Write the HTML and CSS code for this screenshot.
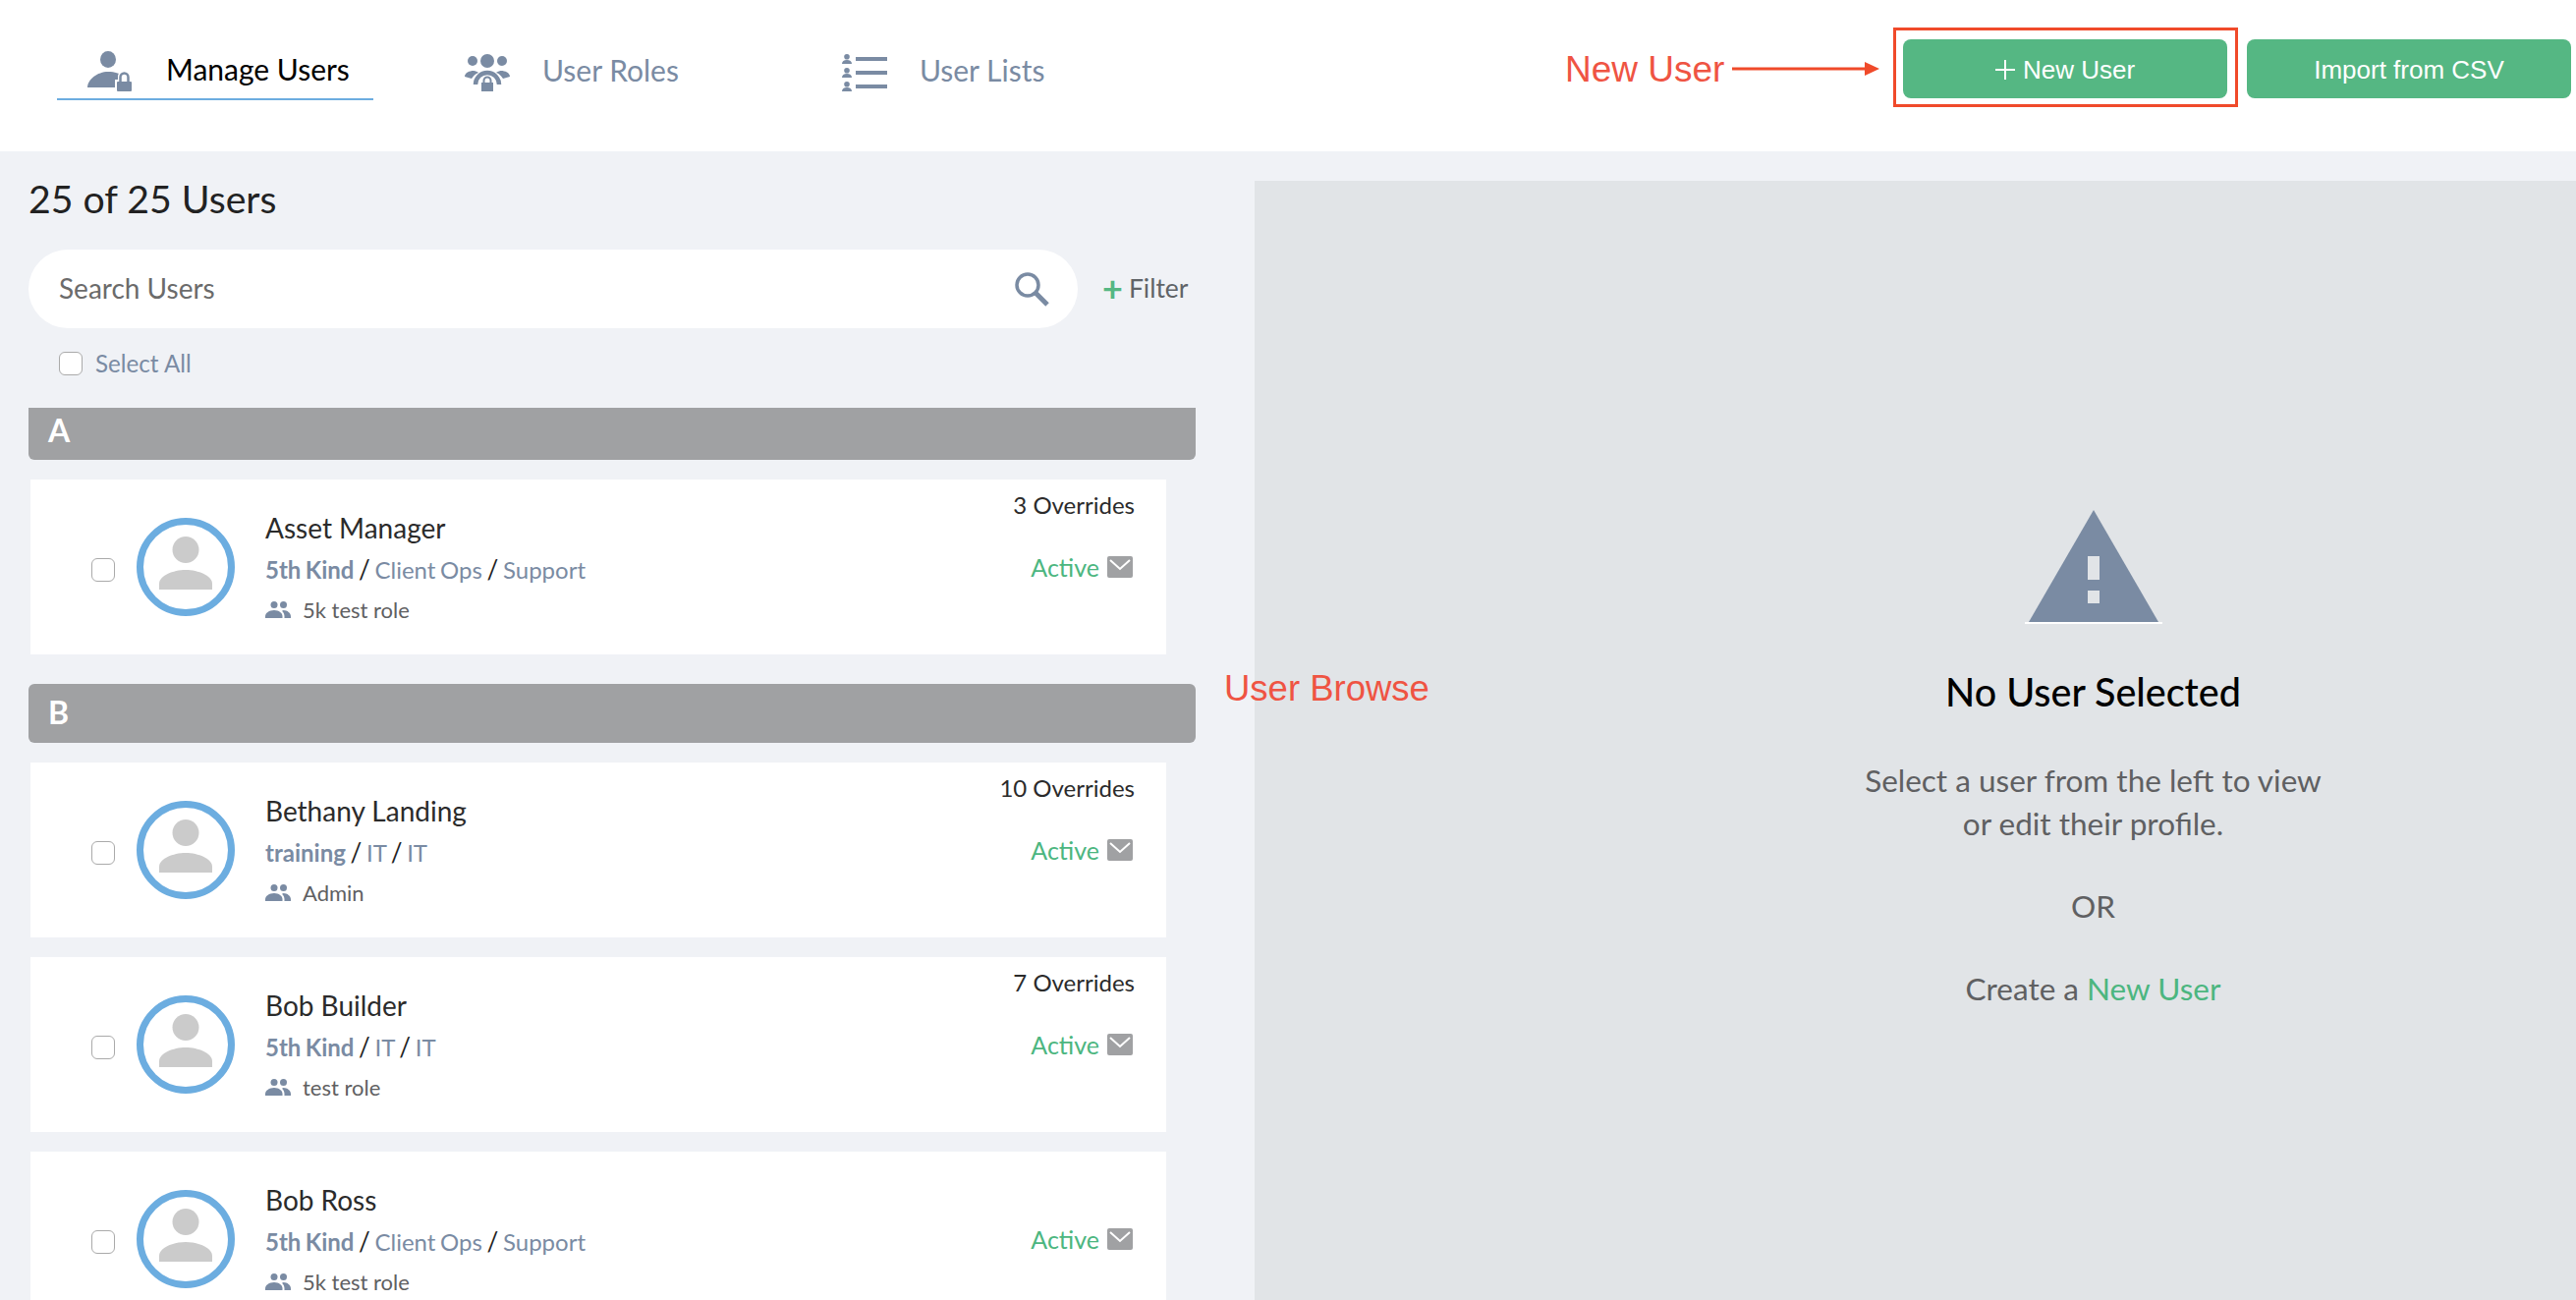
FILE: index.html
```html
<!DOCTYPE html>
<html lang="en">
<head>
    <meta charset="UTF-8">
    <title>Manage Users</title>
    <link rel="stylesheet" href="styles.css">
</head>
<body>

<svg class="icon-defs" width="0" height="0">
    <symbol id="icon-envelope" viewBox="0 0 26 22">
        <rect width="26" height="22" rx="2" fill="#a0a1a3"/>
        <path d="M3 4l10 9 10-9" fill="none" stroke="#fff" stroke-width="2"/>
    </symbol>
    <symbol id="icon-people" viewBox="0 0 26 17">
        <circle cx="9" cy="3.500" r="3.500"/>
        <circle cx="18.500" cy="3.500" r="3.500"/>
        <path d="M0 17v-2c0-3 4-6 9-6s8.500 3 8.500 6v2z"/>
        <path d="M18.500 9c4 0 7.500 3 7.500 6v2h-6.500v-2c0-2-.8-3.500-2.500-5.300z"/>
    </symbol>
    <symbol id="icon-avatar" viewBox="0 0 54 54">
        <circle cx="27" cy="13.500" r="13.500"/>
        <path d="M0 54v-6C0 40 14 34 27 34s27 6 27 14v6z"/>
    </symbol>
</svg>

<header class="top-bar">
    <nav class="tabs">
        <a class="tab tab-active">
            <svg class="tab-icon" viewBox="0 0 46 42" width="46" height="42">
                <ellipse cx="21" cy="8.500" rx="8" ry="8.500"/>
                <path d="M0 37c0-8 10-16 21-16 7 0 12 2 14 4l2 12z"/>
                <path d="M28 42V29h3v-3a6.500 6.500 0 0 1 13 0v3h2v13z" fill="#fff"/>
                <path d="M33.500 32v-5.500a4 4 0 0 1 8 0V32" fill="none" stroke="#7a8ba3" stroke-width="2.500"/>
                <rect x="30" y="31" width="15" height="10" rx="1"/>
            </svg>
            <span>Manage Users</span>
        </a>
        <a class="tab">
            <svg class="tab-icon" viewBox="0 0 46 38" width="46" height="38">
                <circle cx="23" cy="7" r="7"/>
                <circle cx="8" cy="7" r="5"/>
                <circle cx="38" cy="7" r="5"/>
                <path d="M0 23c0-4 5-6 9-6 2 0 4 1 5 2-3 1-5 3-7 6z"/>
                <path d="M46 23c0-4-5-6-9-6-2 0-4 1-5 2 3 1 5 3 7 6z"/>
                <path d="M11 31a12 12 0 0 1 24 0" fill="none" stroke="#7a8ba3" stroke-width="4.500"/>
                <path d="M15 38V29h3v-2a5 5 0 0 1 10 0v2h3v9z" fill="#fff"/>
                <path d="M19.500 30v-3a3.500 3.500 0 0 1 7 0v3" fill="none" stroke="#7a8ba3" stroke-width="2"/>
                <rect x="17" y="29" width="12" height="9"/>
            </svg>
            <span>User Roles</span>
        </a>
        <a class="tab tab-lists">
            <svg class="tab-icon" viewBox="0 0 46 38" width="46" height="38">
                <circle cx="5" cy="2.800" r="2.800"/>
                <path d="M0 10c0-2.500 2-4 5-4s5 1.500 5 4z"/>
                <circle cx="5" cy="16.800" r="2.800"/>
                <path d="M0 24c0-2.500 2-4 5-4s5 1.500 5 4z"/>
                <circle cx="5" cy="30.800" r="2.800"/>
                <path d="M0 38c0-2.500 2-4 5-4s5 1.500 5 4z"/>
                <rect x="14" y="3" width="32" height="4"/>
                <rect x="14" y="17" width="32" height="4"/>
                <rect x="14" y="31" width="32" height="4"/>
            </svg>
            <span>User Lists</span>
        </a>
    </nav>
    <div class="top-actions">
        <button class="btn btn-new">
            <svg viewBox="0 0 20 20" width="20" height="20"><path d="M9 0h2v9h9v2h-9v9H9v-9H0V9h9z" fill="#fff"/></svg>
            New User
        </button>
        <button class="btn">Import from CSV</button>
    </div>
</header>

<main class="content">
    <section class="browse">
        <h1>25 of 25 Users</h1>
        <div class="search-row">
            <div class="search">
                <span>Search Users</span>
                <svg viewBox="0 0 36 36" width="36" height="36" fill="none" stroke="#7a8ba3">
                    <circle cx="14" cy="14" r="11" stroke-width="3.500"/>
                    <path d="M22 22l12 12" stroke-width="5"/>
                </svg>
            </div>
            <div class="filter"><b>+</b> Filter</div>
        </div>
        <label class="select-all"><span class="check"></span>Select All</label>

        <div class="letter letter-first">A</div>
        <article class="user">
            <span class="check"></span>
            <div class="avatar"><svg width="54" height="54"><use href="#icon-avatar"/></svg></div>
            <div class="user-info">
                <div class="user-name">Asset Manager</div>
                <div class="user-org"><b>5th Kind</b> <i>/</i> Client Ops <i>/</i> Support</div>
                <div class="user-role"><svg width="26" height="17"><use href="#icon-people"/></svg>5k test role</div>
            </div>
            <div class="user-side">
                <div class="overrides">3 Overrides</div>
                <div class="status">Active <svg width="26" height="22"><use href="#icon-envelope"/></svg></div>
            </div>
        </article>

        <div class="letter">B</div>
        <article class="user">
            <span class="check"></span>
            <div class="avatar"><svg width="54" height="54"><use href="#icon-avatar"/></svg></div>
            <div class="user-info">
                <div class="user-name">Bethany Landing</div>
                <div class="user-org"><b>training</b> <i>/</i> IT <i>/</i> IT</div>
                <div class="user-role"><svg width="26" height="17"><use href="#icon-people"/></svg>Admin</div>
            </div>
            <div class="user-side">
                <div class="overrides">10 Overrides</div>
                <div class="status">Active <svg width="26" height="22"><use href="#icon-envelope"/></svg></div>
            </div>
        </article>
        <article class="user">
            <span class="check"></span>
            <div class="avatar"><svg width="54" height="54"><use href="#icon-avatar"/></svg></div>
            <div class="user-info">
                <div class="user-name">Bob Builder</div>
                <div class="user-org"><b>5th Kind</b> <i>/</i> IT <i>/</i> IT</div>
                <div class="user-role"><svg width="26" height="17"><use href="#icon-people"/></svg>test role</div>
            </div>
            <div class="user-side">
                <div class="overrides">7 Overrides</div>
                <div class="status">Active <svg width="26" height="22"><use href="#icon-envelope"/></svg></div>
            </div>
        </article>
        <article class="user">
            <span class="check"></span>
            <div class="avatar"><svg width="54" height="54"><use href="#icon-avatar"/></svg></div>
            <div class="user-info">
                <div class="user-name">Bob Ross</div>
                <div class="user-org"><b>5th Kind</b> <i>/</i> Client Ops <i>/</i> Support</div>
                <div class="user-role"><svg width="26" height="17"><use href="#icon-people"/></svg>5k test role</div>
            </div>
            <div class="user-side">
                <div class="overrides"></div>
                <div class="status">Active <svg width="26" height="22"><use href="#icon-envelope"/></svg></div>
            </div>
        </article>
    </section>

    <section class="detail">
        <svg class="warning" viewBox="0 0 140 116" width="140" height="116">
            <path d="M70 0l66 114H4z" fill="#7a8ba3"/>
            <rect x="0" y="114" width="140" height="2" fill="#fff"/>
            <rect x="64" y="47" width="12" height="24" fill="#e1e4e7"/>
            <rect x="64" y="82" width="12" height="13" fill="#e1e4e7"/>
        </svg>
        <h2>No User Selected</h2>
        <p>Select a user from the left to view<br>or edit their profile.</p>
        <p>OR</p>
        <p>Create a <a>New User</a></p>
    </section>
</main>

<!-- annotations drawn on top of the screenshot -->
<div class="note note-new">New User</div>
<svg class="note-arrow" viewBox="0 0 150 16" width="150" height="16">
    <path d="M0 8h137" stroke="#f04a2a" stroke-width="3"/>
    <path d="M135 1l15 7-15 7z" fill="#f04a2a"/>
</svg>
<div class="note-box"></div>
<div class="note note-browse">User Browse</div>

</body>
</html>
```

FILE: styles.css
```css
* {
    box-sizing: border-box;
}
html, body {
    height: 100%;
    overflow: hidden;
}
body {
    margin: 0;
    font-family: Lato, "Open Sans", sans-serif;
    background: #f0f2f6;
    color: #222;
}
.icon-defs {
    position: absolute;
}

/* top bar */
.top-bar {
    height: 154px;
    background: #fff;
    display: flex;
    justify-content: space-between;
    padding: 40px 5px 0 58px;
}
.tabs {
    display: flex;
    align-items: flex-start;
    gap: 93px;
}
.tab {
    display: flex;
    align-items: center;
    gap: 33px;
    height: 62px;
    font-size: 30px;
    color: #7a8ba3;
}
.tab-active {
    gap: 34px;
    width: 322px;
    padding-left: 31px;
    color: #000;
    border-bottom: 2px solid #6cade0;
}
.tab-lists {
    margin-left: 73px;
}
.tab-icon {
    fill: #7a8ba3;
    margin-top: 6px;
}
.top-actions {
    display: flex;
    gap: 20px;
}
.btn {
    display: flex;
    align-items: center;
    justify-content: center;
    gap: 8px;
    width: 330px;
    height: 60px;
    padding-top: 3px;
    border: 0;
    border-radius: 8px;
    background: #55b783;
    color: #fff;
    font-family: "Liberation Sans", Arial, sans-serif;
    font-size: 26px;
}
.btn-new {
    padding-left: 6px;
}

/* layout */
.content {
    display: flex;
    height: calc(100% - 154px);
}
.browse {
    width: 1277px;
    padding: 0 60px 0 29px;
}
.browse h1 {
    font-size: 39.200px;
    font-weight: 400;
    margin: 25px 0 0;
    line-height: 46px;
    color: #222;
}
.search-row {
    display: flex;
    align-items: center;
    margin-top: 29px;
    gap: 25px;
}
.search {
    width: 1068px;
    height: 80px;
    border-radius: 40px;
    background: #fff;
    display: flex;
    align-items: center;
    justify-content: space-between;
    padding: 0 29px 0 31px;
    font-size: 28px;
    color: #6b6b6b;
}
.search span {
    padding-bottom: 2px;
}
.filter {
    display: flex;
    align-items: center;
    gap: 6px;
    height: 40px;
    padding-bottom: 2px;
    font-size: 26.500px;
    color: #606468;
    white-space: nowrap;
}
.filter b {
    color: #55b783;
    font-size: 36px;
    font-weight: 700;
}
.check {
    display: block;
    flex: none;
    width: 24px;
    height: 24px;
    background: #fff;
    border: 1px solid #aaa;
    border-radius: 6px;
}
.select-all {
    display: flex;
    align-items: center;
    gap: 13px;
    margin: 21px 0 0 31px;
    font-size: 24.200px;
    color: #7a8ba3;
}

/* letter headers */
.letter {
    width: 1188px;
    height: 60px;
    margin-top: 30px;
    padding-left: 20px;
    background: #a0a1a3;
    border-radius: 6px;
    color: #fff;
    font-size: 32px;
    font-weight: 700;
    line-height: 58px;
}
.letter-first {
    height: 53px;
    line-height: 46px;
    margin-top: 31px;
    border-radius: 0 0 6px 6px;
}

/* user rows */
.user {
    width: 1156px;
    height: 178px;
    margin: 20px 0 0 2px;
    background: #fff;
    display: flex;
    align-items: center;
    padding: 0 32px 0 62px;
}
.user > .check {
    margin-right: 22px;
    margin-top: 6px;
}
.avatar {
    flex: none;
    width: 100px;
    height: 100px;
    border: 7px solid #6cade0;
    border-radius: 50%;
    display: flex;
    justify-content: center;
    align-items: flex-start;
    padding-top: 12px;
    fill: #cbcbcb;
    margin-right: 31px;
}
.user-info {
    flex: 1;
}
.user-name {
    font-size: 28px;
    line-height: 36px;
    color: #2b2b2b;
}
.user-org {
    font-size: 24px;
    word-spacing: -1.500px;
    line-height: 34px;
    margin-top: 7px;
    color: #7a8ba3;
}
.user-org i {
    font-style: normal;
    font-size: 26px;
    color: #222;
}
.user-role {
    display: flex;
    align-items: center;
    gap: 12px;
    font-size: 22px;
    line-height: 30px;
    margin-top: 9px;
    color: #5f6062;
    fill: #7a8ba3;
}
.user-side {
    align-self: stretch;
    text-align: right;
}
.overrides {
    font-size: 24px;
    line-height: 32px;
    margin-top: 10px;
    height: 32px;
    color: #2b2b2b;
}
.status {
    display: flex;
    justify-content: flex-end;
    align-items: center;
    gap: 8px;
    margin: 30px 2px 0 0;
    font-size: 25px;
    line-height: 34px;
    color: #4cb680;
}

/* no user selected */
.detail {
    flex: 1;
    margin-top: 30px;
    padding-left: 362px;
    background: #e1e4e7;
    text-align: center;
    font-size: 31.500px;
    color: #5f6062;
}
.warning {
    display: block;
    margin: 335px auto 0;
}
.detail h2 {
    font-size: 39.500px;
    font-weight: 500;
    line-height: 50px;
    color: #000;
    margin: 44px 0 0;
}
.detail p {
    margin: 40px 0 0;
    line-height: 44px;
}
.detail h2 + p {
    margin-top: 43px;
}
.detail a {
    color: #4cb680;
}

/* annotations */
.note {
    position: absolute;
    font-family: "Liberation Sans", Arial, sans-serif;
    font-size: 37px;
    line-height: 44px;
    color: #ef5443;
}
.note-new {
    left: 1593px;
    top: 49px;
}
.note-browse {
    left: 1246px;
    top: 679px;
    font-size: 36.500px;
}
.note-arrow {
    position: absolute;
    left: 1763px;
    top: 62px;
}
.note-box {
    position: absolute;
    left: 1927px;
    top: 28px;
    width: 351px;
    height: 81px;
    border: 3px solid #f04a2a;
}
```
